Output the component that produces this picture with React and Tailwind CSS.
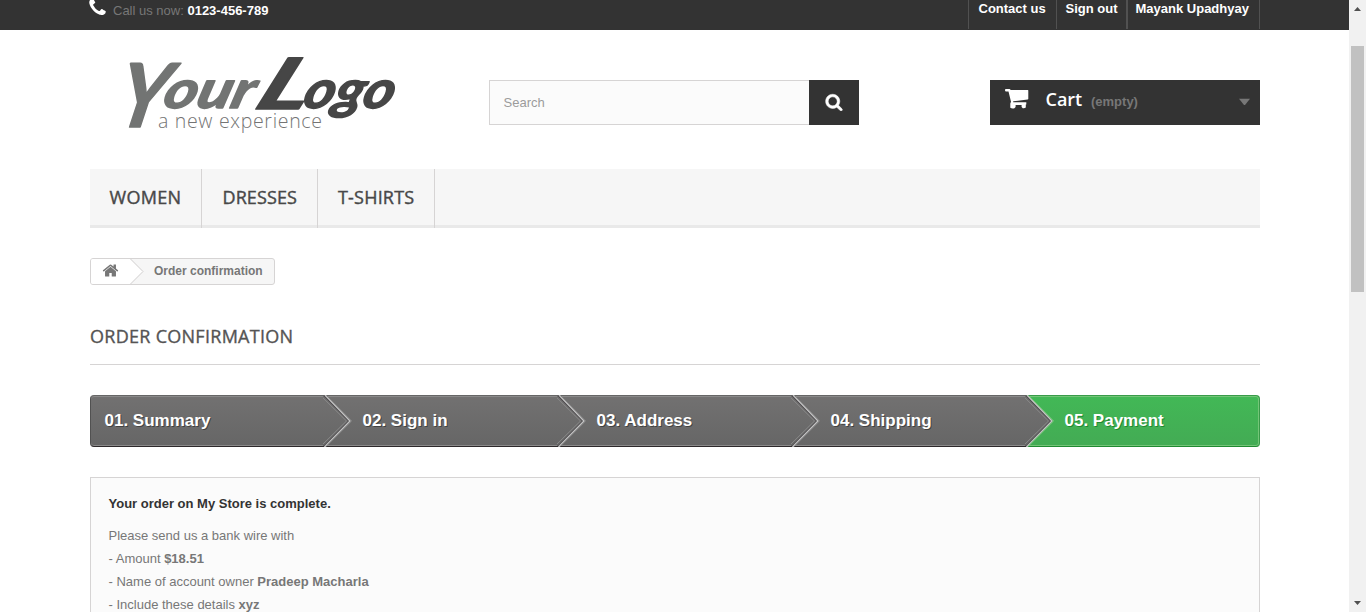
import React from "react";

const STEPS = ["01. Summary", "02. Sign in", "03. Address", "04. Shipping", "05. Payment"];

function PhoneIcon() {
  return (
    <svg className="-mt-[4px] h-[21px] w-[21px] shrink-0" viewBox="0 0 1792 1792" fill="#fff">
      <path d="M1600 1240q0 27-10 70.5t-21 68.5q-21 50-122 106-94 51-186 51-27 0-53-3.5t-57.5-12.5-47-14.5-55.5-20.5-49-18q-98-35-175-83-127-79-264-216t-216-264q-48-77-83-175-3-9-18-49t-20.5-55.5-14.5-47-12.5-57.5-3.5-53q0-92 51-186 56-101 106-122 25-11 68.5-21t70.5-10q14 0 21 3 18 6 53 76 11 19 30 54t35 63.5 31 53.5q3 4 17.5 25t21.5 35.5 7 28.5q0 20-28.5 50t-62 55-62 53-28.5 46q0 9 5 22.5t8.5 20.5 14 24 11.5 19q76 137 174 235t235 174q2 1 19 11.5t24 14 20.5 8.5 22.5 5q18 0 46-28.5t53-62 55-62 50-28.5q14 0 28.5 7t35.5 21.5 25 17.5q25 15 53.5 31t63.5 35 54 30q70 35 76 53 3 7 3 21z" />
    </svg>
  );
}

function SearchIcon() {
  return (
    <svg className="h-[18px] w-[18px]" viewBox="0 0 1792 1792" fill="#fff" stroke="#fff" strokeWidth="50">
      <path d="M1216 832q0-185-131.5-316.5t-316.5-131.5-316.5 131.5-131.5 316.5 131.5 316.5 316.5 131.5 316.5-131.5 131.5-316.5zm512 832q0 52-38 90t-90 38q-54 0-90-38l-343-342q-179 124-399 124-143 0-273.5-55.5t-225-150-150-225-55.5-273.5 55.5-273.5 150-225 225-150 273.5-55.5 273.5 55.5 225 150 150 225 55.5 273.5q0 220-124 399l343 343q37 37 37 90z" />
    </svg>
  );
}

function HomeIcon() {
  return (
    <svg className="h-[17px] w-[17px]" viewBox="0 0 1792 1792" fill="#777">
      <path d="M1472 992v480q0 26-19 45t-45 19h-384v-384h-256v384h-384q-26 0-45-19t-19-45v-480q0-1 .5-3t.5-3l575-474 575 474q1 2 1 6zm223-69l-62 74q-8 9-21 11h-3q-13 0-21-7l-692-577-692 577q-12 8-24 7-13-2-21-11l-62-74q-8-10-7-23.5t11-21.5l719-599q32-26 76-26t76 26l244 204v-195q0-14 9-23t23-9h192q14 0 23 9t9 23v408l219 182q10 8 11 21.5t-7 23.5z" />
    </svg>
  );
}

function CartIcon() {
  return (
    <svg className="h-[20px] w-[24px]" viewBox="0 0 24 20" fill="#fff">
      <path d="M0.8 0H4.4Q5.3 0 5.6 1H22.8Q23.3 1 23.3 1.6V9.8Q23.3 10.5 22.6 10.6L8.2 12.3V13.3H21.3V15.5H20.8V18.6Q19.6 19.5 17.8 19.2L16.6 18V16H10.6V18L9.4 19.2Q7 19.7 5.3 18.8V14.5L6 12.8L3.5 2.4H0.8Q0 2.2 0 1.2Q0 0.1 0.8 0Z" />
    </svg>
  );
}

function Logo() {
  return (
    <svg className="h-[90px] w-[300px] overflow-visible font-['Lato',sans-serif] font-bold italic" viewBox="110 50 300 90" strokeLinejoin="round" strokeWidth="1.5">
      <g fill="#727473" stroke="#727473">
        <text transform="translate(113 127) skewX(-12)" fontSize="88" textLength="50" lengthAdjust="spacingAndGlyphs">Y</text>
        <text transform="translate(161 108) skewX(-16)" fontSize="53" textLength="90" lengthAdjust="spacingAndGlyphs">our</text>
      </g>
      <g fill="#464646" stroke="#464646">
        <text transform="translate(252 109) skewX(-24)" fontSize="71" textLength="52" lengthAdjust="spacingAndGlyphs">L</text>
        <text transform="translate(301 108) skewX(-16)" fontSize="53" textLength="90" lengthAdjust="spacingAndGlyphs">ogo</text>
      </g>
      <text className="font-['Open_Sans',sans-serif] font-light not-italic" x="158" y="128" fill="#747474" stroke="none" fontSize="19.5" textLength="164">a new experience</text>
    </svg>
  );
}

function StepArrow({ last }) {
  return (
    <svg className="absolute top-0 left-[-1px] z-10 h-[52px] w-[30px]" viewBox="0 0 30 52" fill="none">
      <path d="M0 1H1L26.5 26L1 51H0Z" fill="url(#stepGray)" />
      <path d="M0 51.5H1.5" stroke="#2d292b" />
      <path d="M-1.5 1.5L23.5 26L-1.5 50.5" stroke="#888" strokeWidth="1" />
      <path d="M1 0.5L26 26L1 51.5" stroke="#4a474a" strokeWidth="1.3" />
      <path d="M2 0L27 26L1.5 52" stroke="#c4c4c4" strokeWidth="1.4" />
      <path d="M4 1L28.7 26L3.5 51" stroke={last ? "#74c578" : "#858585"} strokeWidth="1" />
    </svg>
  );
}

function Steps() {
  return (
    <ol className="mt-[30px] flex h-[52px] text-[17px] leading-[50px] font-bold text-white">
      {STEPS.map((s, i) => {
        const last = i === STEPS.length - 1;
        const tone = last
          ? "rounded-r-[4px] border-r border-t-[#399b49] border-r-[#399b49] border-b-[#208931] bg-linear-to-b from-[#42b856] to-[#43ab54] shadow-[inset_0_0_0_1px_#74c578] [text-shadow:1px_1px_#208931]"
          : "border-t-[#666] border-b-[#2d292b] bg-linear-to-b from-[#727171] to-[#666] shadow-[inset_0_1px_#8b8a8a,inset_0_-1px_#8b8a8a] [text-shadow:1px_1px_rgba(0,0,0,0.4)]";
        const edge = i === 0 ? "rounded-l-[4px] border-l border-l-[#515151] pl-[13.5px]" : "pl-[38.5px]";
        return (
          <li key={s} className={`relative w-[234px] border-t border-b ${tone} ${edge}`}>
            {i > 0 && (
              <span className="absolute -top-px left-0">
                <StepArrow last={last} />
              </span>
            )}
            {s}
          </li>
        );
      })}
    </ol>
  );
}

export default function App() {
  return (
    <div className="flex h-[612px] w-[1366px] overflow-hidden bg-white font-['Liberation_Sans',Arial,sans-serif] text-[13px] text-[#777]">
      <svg className="absolute h-0 w-0">
        <linearGradient id="stepGray" x1="0" y1="0" x2="0" y2="1">
          <stop offset="0" stopColor="#727171" />
          <stop offset="1" stopColor="#666" />
        </linearGradient>
      </svg>
      <div className="w-[1349px] shrink-0">
        <div className="h-[30px] bg-[#333] pr-[89px] pl-[87px]">
          <div className="flex h-[29px] justify-between leading-[18px]">
            <div className="flex pt-px">
              <PhoneIcon />
              <span className="ml-[5px] pt-px">
                Call us now: <b className="text-white">0123-456-789</b>
              </span>
            </div>
            <nav className="flex font-bold text-white">
              <a className="w-[88px] border-l border-[#515151] pl-[9.5px]">Contact us</a>
              <a className="w-[70px] border-l border-[#515151] pl-[8.5px]">Sign out</a>
              <a className="w-[134px] border-r border-l-2 border-[#515151] pl-[7.5px] whitespace-nowrap">Mayank Upadhyay</a>
            </nav>
          </div>
        </div>

        <div className="ml-[90px] w-[1170px]">
          <header className="flex h-[139px] items-start">
            <div className="mt-[20px] ml-[20px] w-[379px]">
              <Logo />
            </div>
            <div className="mt-[50px] flex h-[45px] w-[370px]">
              <div className="flex w-[320px] items-center border border-r-0 border-[#d6d4d4] bg-[#fbfbfb] pl-[13.5px] text-[#9c9b9b]">Search</div>
              <button className="flex w-[50px] items-center justify-center bg-[#333] pb-[2px]">
                <SearchIcon />
              </button>
            </div>
            <div className="mt-[50px] ml-[131px] flex h-[45px] w-[270px] bg-[#333] pl-[15px]">
              <span className="mt-[9px]">
                <CartIcon />
              </span>
              <span className="ml-[16.5px] w-[45.5px] font-['Open_Sans',sans-serif] text-[18px] leading-[39px] font-semibold text-white">Cart</span>
              <span className="leading-[43px] font-bold">(empty)</span>
              <svg className="mt-[18px] mr-[10px] ml-auto h-[8px] w-[11px]" viewBox="0 0 11 8" fill="#777">
                <path d="M0 0.8H11L6 7H5Z" />
              </svg>
            </div>
          </header>

          <nav className="flex h-[59px] border-b-[3px] border-[#e9e9e9] bg-[#f6f6f6] font-['Open_Sans',sans-serif] text-[18px] leading-[57px] tracking-[0.3px] text-[#484848] [-webkit-text-stroke:0.4px_#484848]">
            <a className="h-[59px] w-[112px] border-r border-[#d6d4d4] pl-[19.5px]">WOMEN</a>
            <a className="h-[59px] w-[116px] border-r border-[#d6d4d4] pl-[20.5px] tracking-[0.1px]">DRESSES</a>
            <a className="h-[59px] w-[117px] border-r border-[#d6d4d4] pl-[20px] tracking-[0.2px]">T-SHIRTS</a>
          </nav>

          <div className="mt-[30px] flex h-[27px] w-[185px] overflow-hidden rounded-[3px] border border-[#d6d4d4] bg-[#f6f6f6] text-[12px] leading-[24px] font-bold">
            <span className="flex w-[39px] items-center justify-center bg-white pb-[2px]">
              <HomeIcon />
            </span>
            <svg className="h-[25px] w-[14px]" viewBox="0 0 14 25">
              <path d="M0 0H0.5L13 12.5L0.5 25H0Z" fill="#fff" />
              <path d="M0.5 0L13 12.5L0.5 25" fill="none" stroke="#d0cece" />
            </svg>
            <span className="ml-[10px] whitespace-nowrap">Order confirmation</span>
          </div>

          <h1 className="mt-[36px] h-[44px] border-b border-[#d6d4d4] font-['Open_Sans',sans-serif] text-[18px] leading-[30px] tracking-[0.28px] text-[#555454] [-webkit-text-stroke:0.35px_#555454]">ORDER CONFIRMATION</h1>

          <Steps />

          <section className="mt-[30px] h-[200px] border border-[#d6d4d4] bg-[#fbfbfb] px-[17.5px] pt-[14px] leading-[23px]">
            <p className="mb-[9px] font-bold text-[#333]">Your order on My Store is complete.</p>
            <p>Please send us a bank wire with</p>
            <p>- Amount <b>$18.51</b></p>
            <p>- Name of account owner <b>Pradeep Macharla</b></p>
            <p>- Include these details <b>xyz</b></p>
          </section>
        </div>
      </div>

      <aside className="flex h-[612px] w-[17px] shrink-0 flex-col items-center bg-[#f1f1f1]">
        <svg className="mt-[7px] h-[4px] w-[7px]" viewBox="0 0 7 4" fill="#505050">
          <path d="M0 4L3.5 0L7 4Z" />
        </svg>
        <div className="mt-[35px] h-[246px] w-[13px] bg-[#c1c1c1]" />
        <svg className="mt-auto mb-[7px] h-[4px] w-[7px]" viewBox="0 0 7 4" fill="#505050">
          <path d="M0 0L3.5 4L7 0Z" />
        </svg>
      </aside>
    </div>
  );
}
